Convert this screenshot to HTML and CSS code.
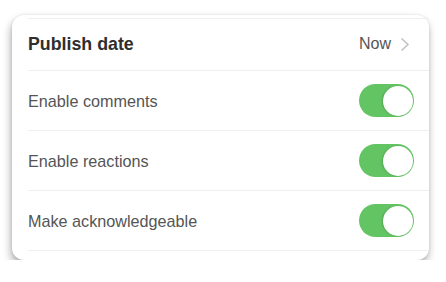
FILE: index.html
```html
<!DOCTYPE html>
<html>
<head>
<meta charset="utf-8">
<link rel="stylesheet" href="styles.css">
</head>
<body>
<div class="card">
  <ul class="list">
    <li class="row row-head">
      <span class="title">Publish date</span>
      <span class="value">Now
        <svg class="chev" width="10" height="15" viewBox="0 0 10 15"><path d="M1.5 1.5 L8 7.5 L1.5 13.5" fill="none" stroke="#c2c2c2" stroke-width="1.6"/></svg>
      </span>
    </li>
    <li class="row"><span class="label">Enable comments</span><span class="toggle on"><span class="knob"></span></span></li>
    <li class="row"><span class="label">Enable reactions</span><span class="toggle on"><span class="knob"></span></span></li>
    <li class="row"><span class="label">Make acknowledgeable</span><span class="toggle on"><span class="knob"></span></span></li>
  </ul>
</div>
</body>
</html>
```
FILE: styles.css
```css
* { box-sizing: border-box; }
body {
  margin: 0;
  background: #fff;
  font-family: "Liberation Sans", Arial, sans-serif;
}
.card {
  margin: 15px 0 0 12px;
  width: 417px;
  height: 245px;
  background: #fff;
  border-radius: 12px;
  padding: 3px 0 9px 0;
  box-shadow: -1px 5px 8px rgba(0,0,0,0.32), 0 0 3px rgba(0,0,0,0.1);
}
.list {
  list-style: none;
  margin: 0 0 0 16px;
  padding: 0;
  border-top: 1px solid #efefef;
}
.row {
  display: flex;
  align-items: center;
  justify-content: space-between;
  height: 60px;
  padding-right: 15px;
  border-bottom: 1px solid #efefef;
}
.row-head { height: 52px; padding-bottom: 1px; }
.title {
  font-size: 17.8px;
  font-weight: 700;
  color: #2e2e2e;
}
.value {
  display: flex;
  align-items: center;
  font-size: 16px;
  color: #555;
  gap: 9px;
  padding-right: 4px;
}
.chev { display: block; }
.label {
  font-size: 16.2px;
  color: #555;
  padding-top: 1px;
}
.toggle {
  position: relative;
  width: 55px;
  height: 33px;
  border-radius: 17px;
  background: #62c462;
}
.knob {
  position: absolute;
  right: 1.5px;
  top: 1.5px;
  width: 30px;
  height: 30px;
  border-radius: 50%;
  background: #fff;
  box-shadow: -1px 0 2px rgba(0,0,0,0.15);
}
```
